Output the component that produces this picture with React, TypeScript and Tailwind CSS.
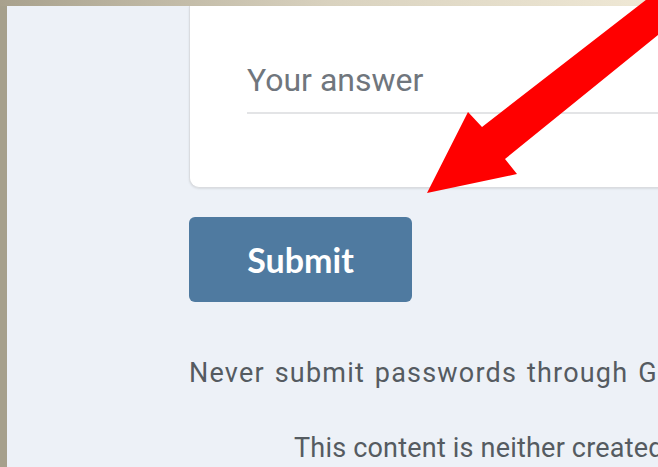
import React from 'react';

// Red pointer drawn over the form, aimed at the submit button
const PointerArrow = () => (
  <svg className="absolute inset-0 pointer-events-none" width={658} height={467} viewBox="0 0 658 467">
    <polygon
      points="427,193 468,112 482,127 700,-42 700,1 505,159 517,174"
      fill="#ff0000"
    />
  </svg>
);

export default function App() {
  return (
    <div
      className="relative w-[658px] h-[467px] overflow-hidden bg-[#edf1f7]"
      style={{ fontFamily: 'Roboto, "Liberation Sans", sans-serif' }}
    >
      <div className="h-[6px] bg-linear-to-r from-[#a8a18d] via-[#d9d2bf] to-[#f0e9d6]" />
      <div className="flex h-[461px]">
        <div className="w-[7px] shrink-0 bg-[#a6a08c]" />
        <div className="flex-1 pl-[182px]">
          {/* question card, scrolled so only its lower part shows */}
          <div className="h-[182px] w-[520px] bg-white border-l border-b border-[#dadce0] rounded-bl-[10px] shadow-[0_1px_2px_rgba(60,64,67,0.12)] pl-[57px] pt-[58px]">
            <div className="text-[32px] leading-none text-[#70767d]">Your answer</div>
            <div className="mt-[16px] h-[2px] bg-[#e3e4e6]" />
          </div>

          <button
            type="button"
            className="mt-[29px] flex h-[85px] w-[223px] items-center justify-center rounded-[6px] bg-[#4f7aa0] text-[34px] font-bold text-white"
            style={{ fontFamily: 'Lato, "Open Sans", sans-serif' }}
          >
            Submit
          </button>

          <p className="mt-[58px] whitespace-nowrap text-[27px] leading-none tracking-[1.2px] [word-spacing:2px] text-[#555b61]">
            Never submit passwords through Google Forms.
          </p>
          <p className="mt-[48px] pl-[105px] whitespace-nowrap text-[27px] leading-none tracking-[0.2px] text-[#555b61]">
            This content is neither created nor endorsed by Google.
          </p>
        </div>
      </div>
      <PointerArrow />
    </div>
  );
}
